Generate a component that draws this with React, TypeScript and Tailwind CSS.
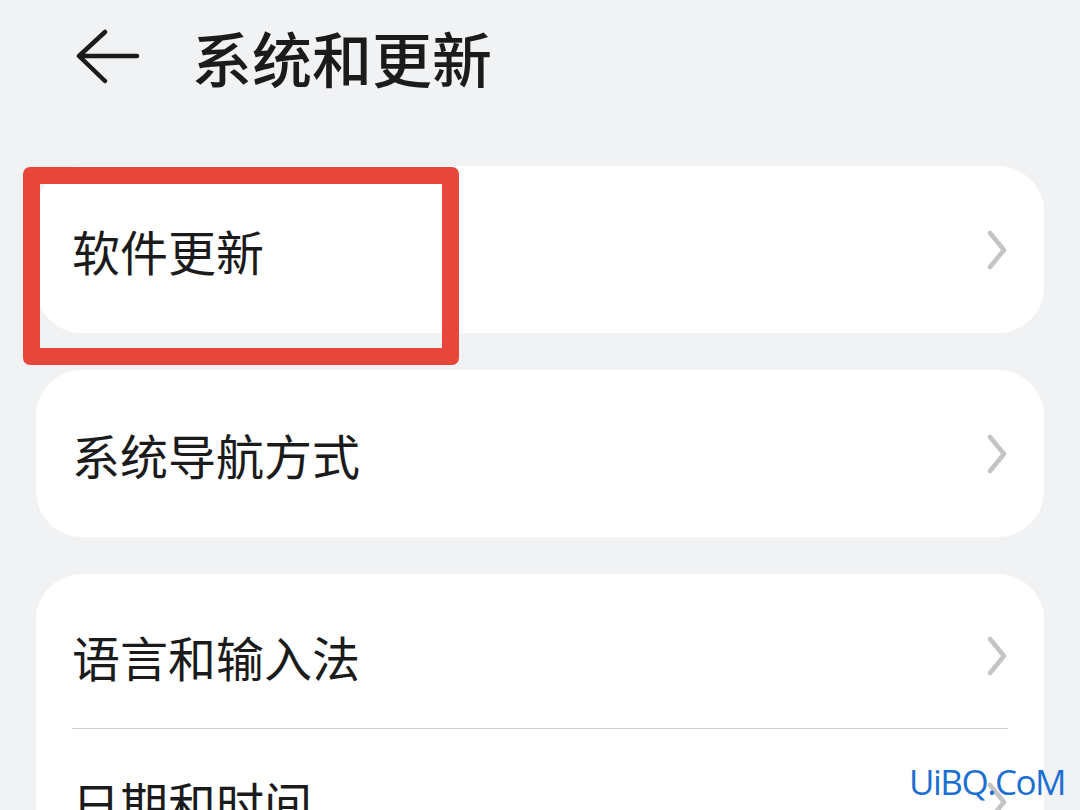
import React from 'react';

const cjk = { fontFamily: '"Noto Sans CJK SC", "Noto Sans", sans-serif' };

function Chevron() {
  return (
    <svg width="24" height="40" viewBox="0 0 24 40" fill="none" className="shrink-0">
      <path d="M6 3 L20 20 L6 37" stroke="#c4c4c4" strokeWidth="4.5" strokeLinecap="round" strokeLinejoin="round" />
    </svg>
  );
}

function Row({ label, className = '' }: { label: string; className?: string }) {
  return (
    <div className={`flex items-center justify-between ${className}`}>
      <span className="text-[48px] leading-none text-[#1b1b1b]" style={cjk}>
        {label}
      </span>
      <Chevron />
    </div>
  );
}

export default function App() {
  return (
    <div className="relative h-[810px] w-[1080px] overflow-hidden bg-[#f1f2f4]">
      <header className="flex h-[120px] items-center pl-[76px] pb-[6px]">
        <svg width="64" height="60" viewBox="0 0 64 60" fill="none" className="shrink-0">
          <path d="M29 5 L3 29 L29 54 M3 29 L61 29" stroke="#1b1b1b" strokeWidth="4.5" strokeLinecap="round" strokeLinejoin="round" />
        </svg>
        <h1 className="ml-[52px] text-[60px] font-medium leading-none text-[#1b1b1b]" style={cjk}>
          系统和更新
        </h1>
      </header>

      <div className="mt-[46px] flex flex-col gap-[37px] px-[36px]">
        <div className="rounded-[46px] bg-white px-[36px]">
          <Row label="软件更新" className="h-[167px]" />
        </div>
        <div className="rounded-[46px] bg-white px-[36px]">
          <Row label="系统导航方式" className="h-[167px]" />
        </div>
        <div className="rounded-[46px] bg-white px-[36px] pt-[9px]">
          <Row label="语言和输入法" className="h-[146px] border-b border-[#d2d2d2]" />
          <Row label="日期和时间" className="h-[146px]" />
        </div>
      </div>

      <div className="absolute left-[23px] top-[167px] h-[198px] w-[436px] rounded-[7px] border-[17px] border-[#e8463a]" />

      <div
        className="absolute left-[909px] top-[764px] text-[35px] leading-none tracking-[-1.5px] text-[#1b6fd0]"
        style={{ fontFamily: '"Open Sans", sans-serif' }}
      >
        UiBQ.CoM
      </div>
    </div>
  );
}
